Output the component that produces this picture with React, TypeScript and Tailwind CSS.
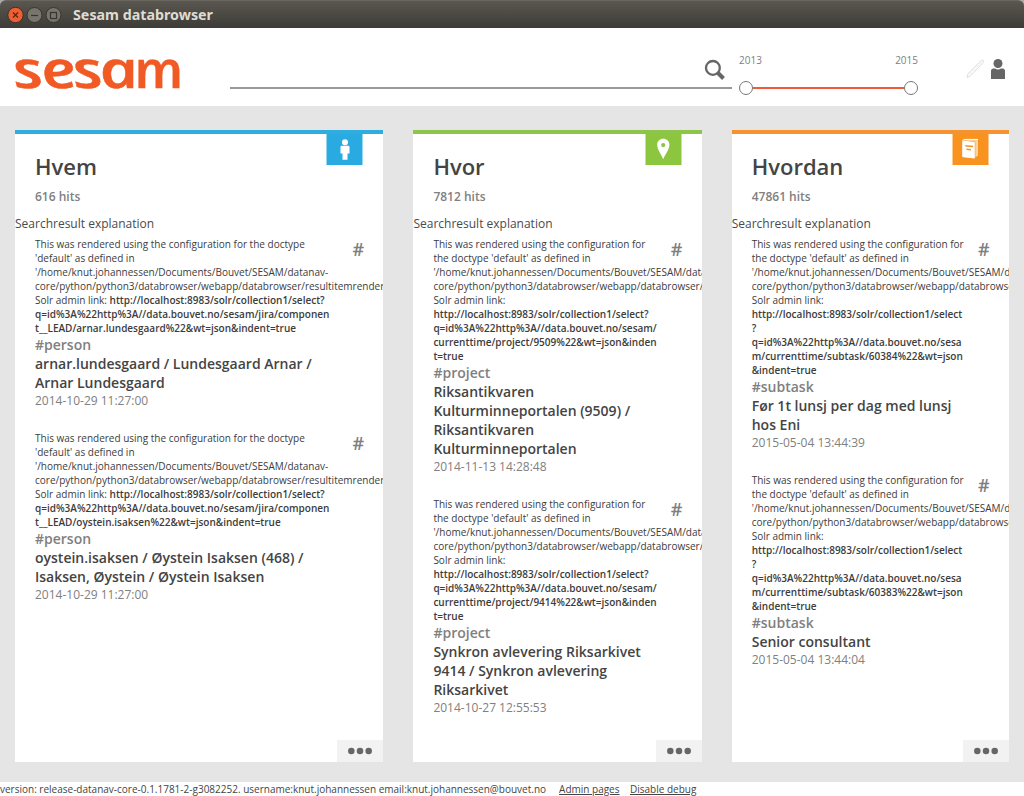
import React from "react";

type Line = { text: string; strong?: string };
type Item = { lines: Line[]; tag: string; title: string[]; date: string };
type Column = {
  name: string;
  hits: string;
  card: string;
  tab: string;
  icon: React.ReactNode;
  items: Item[];
};

const home = "'/home/knut.johannessen/Documents/Bouvet/SESAM/datanav-";
const core = "core/python/python3/databrowser/webapp/databrowser/resultitemrenderer";

const wideIntro: Line[] = [
  { text: "This was rendered using the configuration for the doctype" },
  { text: "'default' as defined in" },
  { text: home },
  { text: core },
];
const narrowIntro: Line[] = [
  { text: "This was rendered using the configuration for" },
  { text: "the doctype 'default' as defined in" },
  { text: home },
  { text: core },
  { text: "Solr admin link:" },
];

const person = (id: string, title: string[]): Item => ({
  lines: [
    ...wideIntro,
    { text: "Solr admin link: ", strong: "http://localhost:8983/solr/collection1/select?" },
    { text: "", strong: "q=id%3A%22http%3A//data.bouvet.no/sesam/jira/componen" },
    { text: "", strong: `t__LEAD/${id}%22&wt=json&indent=true` },
  ],
  tag: "#person",
  title,
  date: "2014-10-29 11:27:00",
});

const project = (id: string, title: string[], date: string): Item => ({
  lines: [
    ...narrowIntro,
    { text: "", strong: "http://localhost:8983/solr/collection1/select?" },
    { text: "", strong: "q=id%3A%22http%3A//data.bouvet.no/sesam/" },
    { text: "", strong: `currenttime/project/${id}%22&wt=json&inden` },
    { text: "", strong: "t=true" },
  ],
  tag: "#project",
  title,
  date,
});

const subtask = (id: string, title: string[], date: string): Item => ({
  lines: [
    ...narrowIntro,
    { text: "", strong: "http://localhost:8983/solr/collection1/select" },
    { text: "", strong: "?" },
    { text: "", strong: "q=id%3A%22http%3A//data.bouvet.no/sesa" },
    { text: "", strong: `m/currenttime/subtask/${id}%22&wt=json` },
    { text: "", strong: "&indent=true" },
  ],
  tag: "#subtask",
  title,
  date,
});

const PersonIcon = () => (
  <svg width="36" height="31" viewBox="0 0 36 31" fill="white">
    <circle cx="18" cy="8.2" r="3" />
    <path d="M15 11.7h6a1.4 1.4 0 0 1 1.5 1.4v6.400h-2v6.300h-5v-6.300h-2v-6.400a1.400 1.400 0 0 1 1.500-1.400z" />
  </svg>
);
const PinIcon = () => (
  <svg width="36" height="31" viewBox="0 0 36 31" fill="white" fillRule="evenodd">
    <path d="M18.2 4.8c-3.6 0-6 2.5-6 6 0 4.500 3.700 9.200 6 14.400 2.300-5.200 6.200-9.900 6.200-14.400 0-3.500-2.600-6-6.200-6zm0 4.200a2.100 2.100 0 1 1 0 4.200 2.100 2.100 0 0 1 0-4.200z" />
  </svg>
);
const BookIcon = () => (
  <svg width="36" height="31" viewBox="0 0 36 31">
    <path d="M11 6.500 L13.500 5.300 H26 V21.500 L23.300 23.500 V7.500z" fill="#fdd3a0" />
    <path d="M10.200 6.600 L22.800 8 V24.500 L11.200 23.300 Q10.200 23.200 10.200 22z" fill="white" />
    <path d="M10.500 6.200 L13 5.400 H26" stroke="white" strokeWidth="1" fill="none" />
    <path d="M13.300 11.800 l7.700.8 M14.500 15.300 l4.500 .4" stroke="#f7931e" strokeWidth="1.500" />
  </svg>
);

const columns: Column[] = [
  {
    name: "Hvem",
    hits: "616 hits",
    card: "w-[368.4px] border-[#30addf]",
    tab: "border-[#94d5f0] bg-[#29abe2]",
    icon: <PersonIcon />,
    items: [
      person("arnar.lundesgaard", ["arnar.lundesgaard / Lundesgaard Arnar /", "Arnar Lundesgaard"]),
      person("oystein.isaksen", ["oystein.isaksen / Øystein Isaksen (468) /", "Isaksen, Øystein / Øystein Isaksen"]),
    ],
  },
  {
    name: "Hvor",
    hits: "7812 hits",
    card: "w-[288.3px] border-[#8dc449]",
    tab: "border-[#c5e29f] bg-[#8cc63f]",
    icon: <PinIcon />,
    items: [
      project("9509", ["Riksantikvaren", "Kulturminneportalen (9509) /", "Riksantikvaren", "Kulturminneportalen"], "2014-11-13 14:28:48"),
      project("9414", ["Synkron avlevering Riksarkivet", "9414 / Synkron avlevering", "Riksarkivet"], "2014-10-27 12:55:53"),
    ],
  },
  {
    name: "Hvordan",
    hits: "47861 hits",
    card: "w-[277.3px] border-[#f59331]",
    tab: "border-[#fbc98e] bg-[#f7931e]",
    icon: <BookIcon />,
    items: [
      subtask("60384", ["Før 1t lunsj per dag med lunsj", "hos Eni"], "2015-05-04 13:44:39"),
      subtask("60383", ["Senior consultant"], "2015-05-04 13:44:04"),
    ],
  },
];

function ResultItem({ item }: { item: Item }) {
  return (
    <article className="mb-[22px] flex justify-between pl-5 pr-[19.3px] whitespace-pre">
      <div className="w-0 grow">
        <div className="text-[10px] leading-[14px] text-[#3c3c3c]">
          {item.lines.map((l, i) => (
            <div key={i} className="h-[14px]">
              {l.text}
              {l.strong && <span className="font-semibold">{l.strong}</span>}
            </div>
          ))}
        </div>
        <div className="text-[14px] leading-[19px] font-semibold text-[#808080]">{item.tag}</div>
        {item.title.map((t, i) => (
          <div key={i} className="text-[14px] leading-[19px] font-semibold text-[#444]">{t}</div>
        ))}
        <div className="h-[17px] text-[12px] leading-[17px] text-[#808080]">{item.date}</div>
      </div>
      <div className="h-6 text-[18px] leading-6 font-semibold text-[#808080]">#</div>
    </article>
  );
}

function ColumnCard({ column }: { column: Column }) {
  return (
    <section className={"flex h-[632px] flex-col overflow-hidden border-t-4 bg-white " + column.card}>
      <div className="flex h-[79px] items-start justify-between pl-5">
        <div>
          <h2 className="mt-[17px] text-[22px] leading-[30px] font-semibold text-[#444]">{column.name}</h2>
          <div className="mt-[8px] text-[12px] leading-4 font-semibold text-[#808080]">{column.hits}</div>
        </div>
        <div className={"mr-5 flex h-[31px] w-[37px] justify-center border-x " + column.tab}>
          <div className="h-[31px] w-9 shrink-0">{column.icon}</div>
        </div>
      </div>
      <div className="mt-[2px] mb-[4px] h-[18px] text-[12px] leading-[18px] text-[#4a4a4a]">Searchresult explanation</div>
      <div className="grow">
        {column.items.map((item) => (
          <ResultItem key={item.date + item.title[0]} item={item} />
        ))}
      </div>
      <button className="flex h-[22px] w-[46px] shrink-0 items-center justify-center self-end bg-[#f2f2f2]">
        <svg width="26" height="8" viewBox="0 0 26 8" fill="#666">
          <circle cx="4.300" cy="4" r="3.250" />
          <circle cx="13" cy="4" r="3.250" />
          <circle cx="21.700" cy="4" r="3.250" />
        </svg>
      </button>
    </section>
  );
}

function TitleBar() {
  return (
    <div className="bg-[#aaa]">
      <div className="flex h-7 items-center rounded-t-[6px] border-t border-[#68665e] bg-linear-to-b from-[#59574f] to-[#3d3c37] pl-[7px]">
        <svg width="60" height="18" viewBox="0 0 60 18" fill="none">
          <circle cx="8.500" cy="9" r="7.700" fill="#ee5f33" stroke="#39342d" />
          <path d="M6 6.500l5 5m0-5l-5 5" stroke="#5c2412" strokeWidth="1.200" />
          <circle cx="27.500" cy="9" r="7.500" fill="#77756c" stroke="#36352f" />
          <path d="M24 9.500h7" stroke="#35342f" strokeWidth="1.200" />
          <circle cx="46.500" cy="9" r="7.500" fill="#77756c" stroke="#36352f" />
          <rect x="43.500" y="6.500" width="6" height="6" stroke="#35342f" strokeWidth="1.200" />
        </svg>
        <svg width="150" height="22" viewBox="0 0 150 22">
          <text x="6" y="16" textLength="140" lengthAdjust="spacingAndGlyphs" className="fill-[#dfdbd2] font-['Noto_Sans',sans-serif] text-[14px] font-bold">Sesam databrowser</text>
        </svg>
      </div>
    </div>
  );
}

function Header() {
  return (
    <header className="flex h-[78px] bg-white">
      <svg width="230" height="78" viewBox="0 0 230 78" className="fill-[#f15a24] font-['Open_Sans',sans-serif] text-[52px] font-semibold italic">
        <text transform="matrix(1.28 0 0.272 1 15 59.500)" x="1.5 23.500 48.200 69" y="0" className="stroke-[#f15a24] [stroke-width:0.5px]">sesa</text>
        <text transform="matrix(1.06 0 0.225 1 137.500 59.500)" x="0" y="0" className="stroke-[#f15a24] [stroke-width:0.4px]">m</text>
      </svg>
      <div className="flex h-[61px] w-[502px] items-end justify-end border-b-2 border-[#999] pb-[6px] pr-[6px]">
        <svg width="22" height="22" viewBox="0 0 22 22" fill="none" stroke="#666">
          <circle cx="8.900" cy="8.900" r="6.900" strokeWidth="2.300" />
          <path d="M14 14l5.500 5.500" strokeWidth="4" />
        </svg>
      </div>
      <div className="ml-[7px] w-[179px] pt-[25px]">
        <div className="flex justify-between text-[10px] leading-[14px] text-[#808080]">
          <span>2013</span>
          <span>2015</span>
        </div>
        <div className="mt-[14px] flex h-[14px] items-center">
          <span className="size-[14px] rounded-full border border-[#777] bg-white" />
          <span className="h-[2px] grow bg-[#f15a35]" />
          <span className="size-[14px] rounded-full border border-[#777] bg-white" />
        </div>
      </div>
      <svg className="mt-[28px] ml-[47px]" width="44" height="26" viewBox="0 0 44 26" fill="none">
        <path d="M2 21.500l1.200-4L16.300 4.400q1-.8 1.900 0 .9 1 .1 1.900L5.500 19.800z" stroke="#ddd" strokeWidth="1" />
        <path d="M4.500 18L16.500 6" stroke="#ddd" strokeWidth="1" strokeDasharray="1 1" />
        <circle cx="33" cy="7.500" r="4.500" fill="#666" />
        <path d="M26 23V15q0-2.500 2.500-2.500h1.500q3 2 6 0h1.500q2.500 0 2.500 2.500V23z" fill="#666" />
      </svg>
    </header>
  );
}

export default function App() {
  return (
    <div className="flex h-[796px] w-[1024px] flex-col overflow-hidden bg-white font-['Open_Sans','Noto_Sans',sans-serif]">
      <TitleBar />
      <Header />
      <main className="flex h-[676px] gap-[30px] bg-[#e5e5e5] px-[15px] pt-6">
        {columns.map((c) => (
          <ColumnCard key={c.name} column={c} />
        ))}
      </main>
      <footer className="flex h-[14px] text-[10px] leading-[14px] whitespace-pre text-[#444]">
        <span>version: release-datanav-core-0.1.1781-2-g3082252. username:knut.johannessen email:knut.johannessen@bouvet.no</span>
        <a className="ml-[13px] underline">Admin pages</a>
        <a className="ml-[10.500px] underline">Disable debug</a>
      </footer>
    </div>
  );
}
